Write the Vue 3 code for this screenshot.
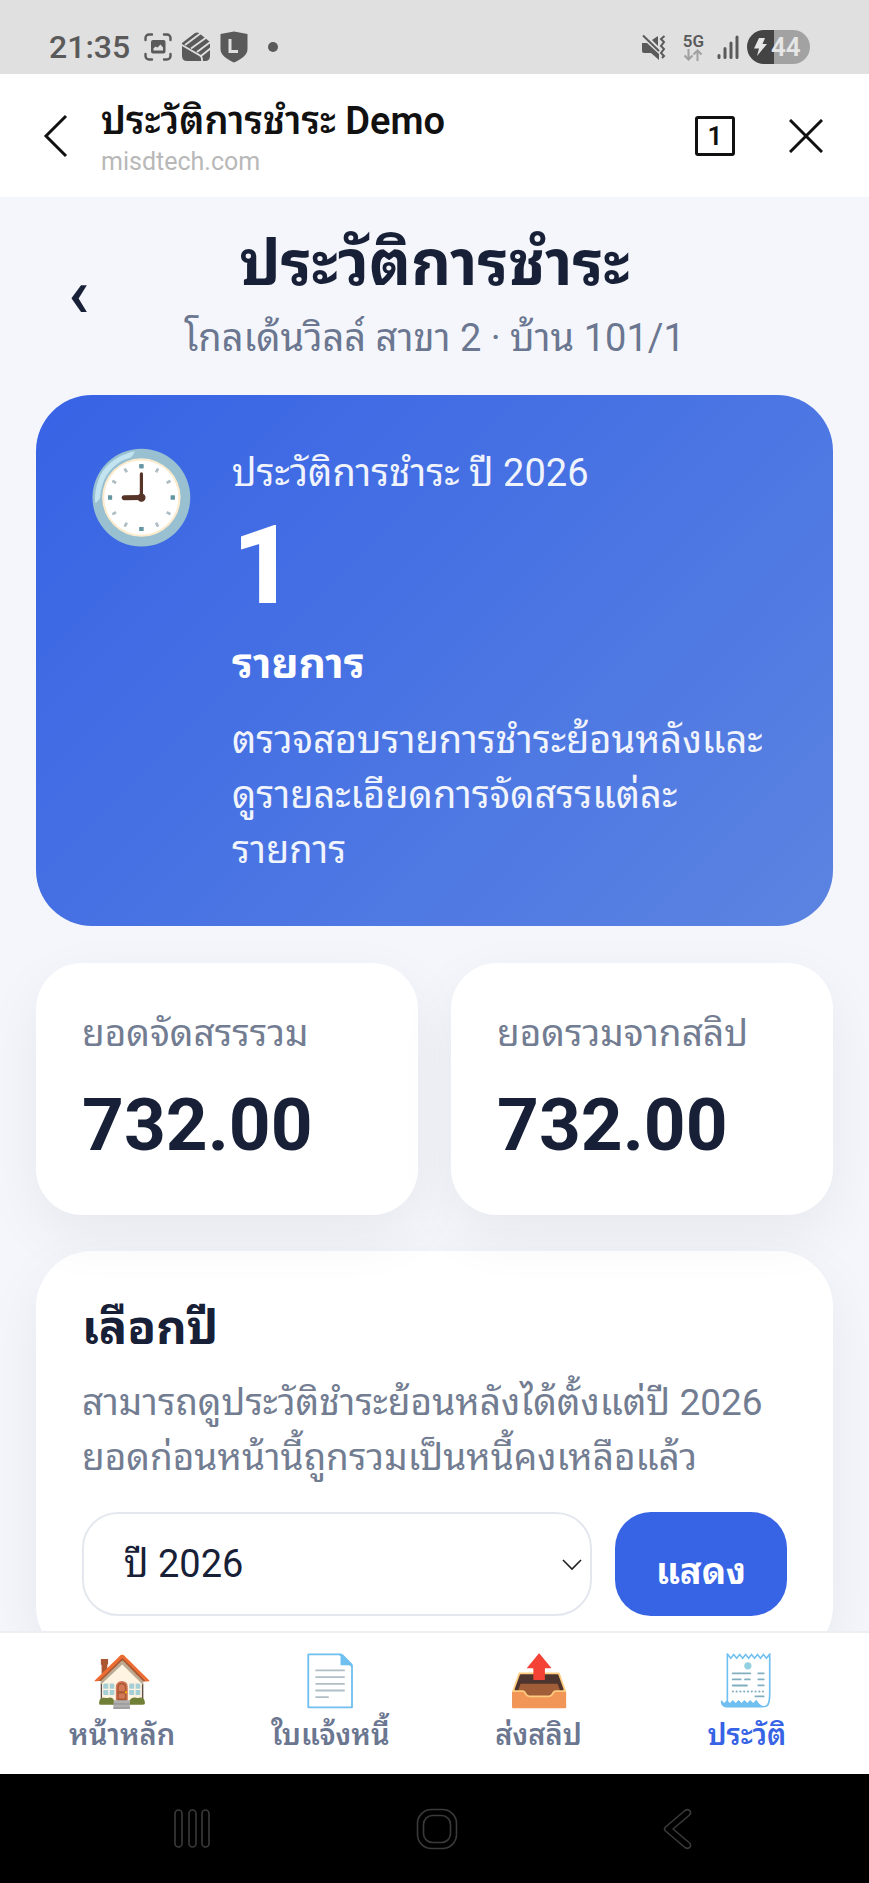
<script setup>
import { ref } from 'vue'

const year = ref('2026')
const totals = [
  { label: 'ยอดจัดสรรรวม', value: '732.00' },
  { label: 'ยอดรวมจากสลิป', value: '732.00' },
]
const tabs = [
  { icon: '🏠', label: 'หน้าหลัก' },
  { icon: '📄', label: 'ใบแจ้งหนี้' },
  { icon: '📤', label: 'ส่งสลิป' },
  { icon: '🧾', label: 'ประวัติ', active: true },
]
</script>

<template>
  <div class="screen">
    <div class="status">
      <div class="status-left">
        <span class="time">21:35</span>
        <svg width="28" height="28" viewBox="0 0 28 28" fill="none" stroke="#5a5a5a" stroke-width="2.4" stroke-linecap="round">
          <path d="M1.5 7V5a3.500 3.500 0 0 1 3.500-3.500H8M20 1.500h3A3.500 3.500 0 0 1 26.500 5v2M26.500 21v2a3.500 3.500 0 0 1-3.500 3.500h-3M8 26.500H5A3.500 3.500 0 0 1 1.500 23v-2" />
          <rect x="7" y="7" width="14.500" height="13.500" rx="2" fill="#5a5a5a" stroke="none" />
          <path d="M9.500 17.500v-2l2-2 2 1 3-3 2.500 3v3z" fill="#e0e0e0" stroke="none" />
        </svg>
        <svg width="30" height="30" viewBox="0 0 30 30">
          <path d="M1 11 14 1q2-1 4 0l11 9v14q0 5-5 5H6q-5 0-5-5z" fill="#5a5a5a" />
          <path d="M4 13 20 1M10 16.500 26 5M16 20 30 9.500" fill="none" stroke="#e0e0e0" stroke-width="1.8" />
          <path d="M0 12.500 19 23.500q2 1.500 2 3.500v3M20 24l10-8" fill="none" stroke="#e0e0e0" stroke-width="1.8" />
        </svg>
        <svg width="28" height="32" viewBox="0 0 28 32">
          <path d="M14 .5 27.500 3v15c0 6-6 10-13.500 13.500C6.500 28 .5 24 .5 18V3z" fill="#5a5a5a" />
          <path d="M10 8v12.500h8" fill="none" stroke="#e0e0e0" stroke-width="3" />
        </svg>
        <span class="dot"></span>
      </div>
      <div class="status-right">
        <svg width="25" height="26" viewBox="0 0 25 26" fill="#5a5a5a">
          <path d="M1 9h5l12 11v6l-8-7H3q-2 0-2-2zM11 6l6-4v10z" />
          <path d="M2 1.500 18 17" stroke="#5a5a5a" stroke-width="2" />
          <path d="M23.500 2 20 5l3 3-3 4 3 3-3 4 3 3-2 2" fill="none" stroke="#5a5a5a" stroke-width="2" />
        </svg>
        <div class="net">
          <span>5G</span>
          <svg width="20" height="12" viewBox="0 0 20 12" fill="none" stroke="#a0a0a0" stroke-width="2"><path d="M5.500 0v10.500M1.500 6.500l4 4 4-4M14.500 12V1.500M10.500 5.500l4-4 4 4" /></svg>
        </div>
        <svg width="22" height="24" viewBox="0 0 22 24" stroke="#5a5a5a" stroke-width="3" stroke-linecap="round"><path d="M2 20.500v2M8 13.500v9M14 8v14.500M20 2v20.500" /></svg>
        <div class="battery">
          <svg width="14" height="18" viewBox="0 0 14 18" fill="#e6e6e6"><path d="M6 0h6L9.500 6H14L4 18l2-7.500H1z" /></svg>
          <span>44</span>
        </div>
      </div>
    </div>

    <header class="browser">
      <button class="plain" aria-label="Back">
        <svg width="26" height="44" viewBox="0 0 26 44" fill="none" stroke="#111" stroke-width="3"><path d="M24 2 4 22l20 20" /></svg>
      </button>
      <div class="site">
        <div class="site-title">ประวัติการชำระ Demo</div>
        <div class="site-host">misdtech.com</div>
      </div>
      <button class="tab-count" aria-label="Tabs">1</button>
      <button class="plain" aria-label="Close">
        <svg width="34" height="34" viewBox="0 0 34 34" fill="none" stroke="#111" stroke-width="3"><path d="M1 1l32 32M33 1 1 33" /></svg>
      </button>
    </header>

    <main class="content">
      <div class="page-head">
        <a class="back" href="#" aria-label="ย้อนกลับ">‹</a>
        <div class="page-text">
          <h1>ประวัติการชำระ</h1>
          <p>โกลเด้นวิลล์ สาขา 2 · บ้าน 101/1</p>
        </div>
      </div>

      <section class="hero">
        <span class="hero-icon">🕘</span>
        <div class="hero-text">
          <div class="hero-label">ประวัติการชำระ ปี 2026</div>
          <div class="hero-number">1</div>
          <div class="hero-unit">รายการ</div>
          <p>ตรวจสอบรายการชำระย้อนหลังและดูรายละเอียดการจัดสรรแต่ละรายการ</p>
        </div>
      </section>

      <section class="totals">
        <div v-for="t in totals" :key="t.label" class="total">
          <div class="total-label">{{ t.label }}</div>
          <div class="total-value">{{ t.value }}</div>
        </div>
      </section>

      <section class="panel">
        <h2><label for="year">เลือกปี</label></h2>
        <p>สามารถดูประวัติชำระย้อนหลังได้ตั้งแต่ปี 2026 ยอดก่อนหน้านี้ถูกรวมเป็นหนี้คงเหลือแล้ว</p>
        <form class="picker" @submit.prevent>
          <div class="select-wrap">
            <select id="year" v-model="year"><option value="2026">ปี 2026</option></select>
            <svg class="caret" width="20" height="12" viewBox="0 0 20 12" fill="none" stroke="#222" stroke-width="1.6"><path d="M1 1l9 9 9-9" /></svg>
          </div>
          <button type="submit" class="submit">แสดง</button>
        </form>
      </section>
    </main>

    <nav class="tabs">
      <a v-for="t in tabs" :key="t.label" href="#" :class="['tab', { active: t.active }]">
        <span class="tab-icon">{{ t.icon }}</span>
        <span>{{ t.label }}</span>
      </a>
    </nav>

    <div class="system">
      <button class="plain" aria-label="Recents">
        <svg width="36" height="42" viewBox="1 0 36 42" fill="none" stroke="#3a3a3a" stroke-width="1.6"><rect x="2" y="2" width="7" height="37" rx="3.500" /><rect x="16" y="2" width="7" height="37" rx="3.500" /><rect x="29" y="2" width="7" height="37" rx="3.500" /></svg>
      </button>
      <button class="plain" aria-label="Home">
        <svg width="42" height="42" viewBox="0 0 42 42" fill="none" stroke="#3a3a3a" stroke-width="1.6"><rect x="1.500" y="1.500" width="39" height="39" rx="14" /><rect x="7.500" y="7.500" width="27" height="27" rx="9" /></svg>
      </button>
      <button class="plain" aria-label="Back">
        <svg width="30" height="42" viewBox="0 0 30 42" fill="none" stroke="#3a3a3a" stroke-width="1.6" stroke-linejoin="round"><path d="M22 2.500 2.500 19q-2 2 0 4L22 39.500q3 2 5-.5 1.500-2.500-1-4.500L10 21 26 7.500q2.500-2 1-4.500-2-2.500-5-.5z" /></svg>
      </button>
    </div>
  </div>
</template>

<style>
body { margin: 0; }
</style>

<style scoped>
* { box-sizing: border-box; }
.screen {
  height: 100vh;
  display: flex;
  flex-direction: column;
  background: #f4f6fb;
  color: #172036;
  font-family: Roboto, "Noto Sans Thai Looped", "Noto Sans Thai", "Noto Sans", sans-serif;
}
h1, h2, p { margin: 0; }
a { color: inherit; text-decoration: none; }
svg { display: block; flex: none; }
button, select { font-family: inherit; cursor: pointer; }
.plain { border: 0; padding: 0; background: none; display: block; }

.status {
  flex: none;
  height: 74px;
  padding: 20px 59px 0 49px;
  display: flex;
  align-items: center;
  justify-content: space-between;
  background: #e0e0e0;
  color: #5a5a5a;
}
.status-left, .status-right { display: flex; align-items: center; }
.status-left { gap: 9px; }
.status-right { gap: 8px; }
.time { font-size: 32px; font-weight: 500; line-height: 32px; margin-right: 5px; }
.dot { width: 10px; height: 10px; border-radius: 50%; background: #5a5a5a; margin-left: 11px; }
.net { margin: 0 5px 0 9px; font-size: 17px; line-height: 16px; font-weight: 600; display: flex; flex-direction: column; align-items: center; }
.battery {
  width: 63px;
  height: 34px;
  border-radius: 17px;
  display: flex;
  align-items: center;
  gap: 4px;
  padding-left: 6px;
  color: #e6e6e6;
  font-size: 26px;
  font-weight: 600;
  background: linear-gradient(90deg, #444 27px, #a2a2a2 27px);
}

.browser {
  flex: none;
  height: 123px;
  padding: 0 46px 0 42px;
  display: flex;
  align-items: center;
  background: #fff;
  color: #111;
}
.site { flex: 1; margin-left: 33px; padding-top: 6px; }
.site-title { font-size: 38px; line-height: 46px; font-weight: 600; }
.site-host { font-size: 25px; line-height: 36px; color: #b8b8b8; }
.tab-count {
  width: 40px;
  height: 40px;
  margin-right: 54px;
  padding: 0;
  border: 3px solid #111;
  border-radius: 3px;
  background: #fff;
  color: #111;
  font-size: 26px;
  font-weight: 600;
}

.content { flex: 1; min-height: 0; overflow: hidden; padding: 0 36px; }
.page-head { display: flex; align-items: center; padding: 26px 32px 30px; }
.back { width: 48px; font-size: 68px; font-weight: 600; line-height: 68px; }
.page-text { flex: 1; margin-right: 48px; text-align: center; }
.page-text h1 { font-size: 62px; line-height: 82px; font-weight: 700; }
.page-text p { margin-top: 6px; font-size: 38px; line-height: 54px; color: #6b7690; }

.hero {
  display: flex;
  align-items: flex-start;
  gap: 40px;
  padding: 50px 54px 48px 50px;
  border-radius: 56px;
  background: linear-gradient(135deg, #3763e5, #5b84e1);
  color: #fff;
}
.hero-icon { width: 106px; font-size: 89px; line-height: 106px; }
.hero-text { flex: 1; min-width: 0; }
.hero-label { font-size: 38px; line-height: 56px; opacity: .92; }
.hero-number { font-size: 110px; line-height: 130px; font-weight: 800; }
.hero-unit { margin-top: 6px; font-size: 42px; line-height: 54px; font-weight: 700; }
.hero p { margin-top: 22px; font-size: 38px; line-height: 55px; opacity: .92; }

.totals { display: grid; grid-template-columns: 1fr 1fr; gap: 33px; margin-top: 37px; }
.total, .panel { background: #fff; box-shadow: 0 20px 60px rgba(15, 23, 42, .06); }
.total { height: 252px; padding: 44px 46px; border-radius: 46px; }
.total-label { font-size: 37px; line-height: 54px; color: #737d92; }
.total-value { margin-top: 22px; font-size: 73px; line-height: 84px; font-weight: 700; }

.panel { margin-top: 36px; padding: 44px 46px 46px; border-radius: 56px; }
.panel h2 { font-size: 47px; line-height: 66px; font-weight: 700; }
.panel p { margin-top: 14px; font-size: 37px; line-height: 55px; color: #737d92; }
.picker { display: flex; gap: 23px; margin-top: 27px; }
.select-wrap { flex: 1; position: relative; }
select {
  appearance: none;
  width: 100%;
  height: 104px;
  padding: 0 40px;
  border: 2px solid #e4e7ee;
  border-radius: 36px;
  background: #fff;
  color: #172036;
  font-size: 38px;
}
.caret { position: absolute; right: 10px; top: 47px; pointer-events: none; }
.submit {
  width: 172px;
  height: 104px;
  padding: 8px 0 0;
  border: 0;
  border-radius: 36px;
  background: #3763e5;
  color: #fff;
  font-size: 36px;
  font-weight: 700;
}

.tabs {
  flex: none;
  height: 143px;
  padding: 14px 18px 0;
  display: grid;
  grid-template-columns: repeat(4, 1fr);
  border-top: 2px solid #eceef2;
  background: #fff;
}
.tab { display: flex; flex-direction: column; align-items: center; color: #6b7690; font-size: 29px; line-height: 40px; font-weight: 600; }
.tab.active { color: #3763e5; }
.tab-icon { font-size: 50px; line-height: 68px; font-weight: 400; }

.system { flex: none; height: 109px; display: flex; align-items: center; justify-content: space-between; padding: 0 176px 0 174px; background: #000; }
</style>
